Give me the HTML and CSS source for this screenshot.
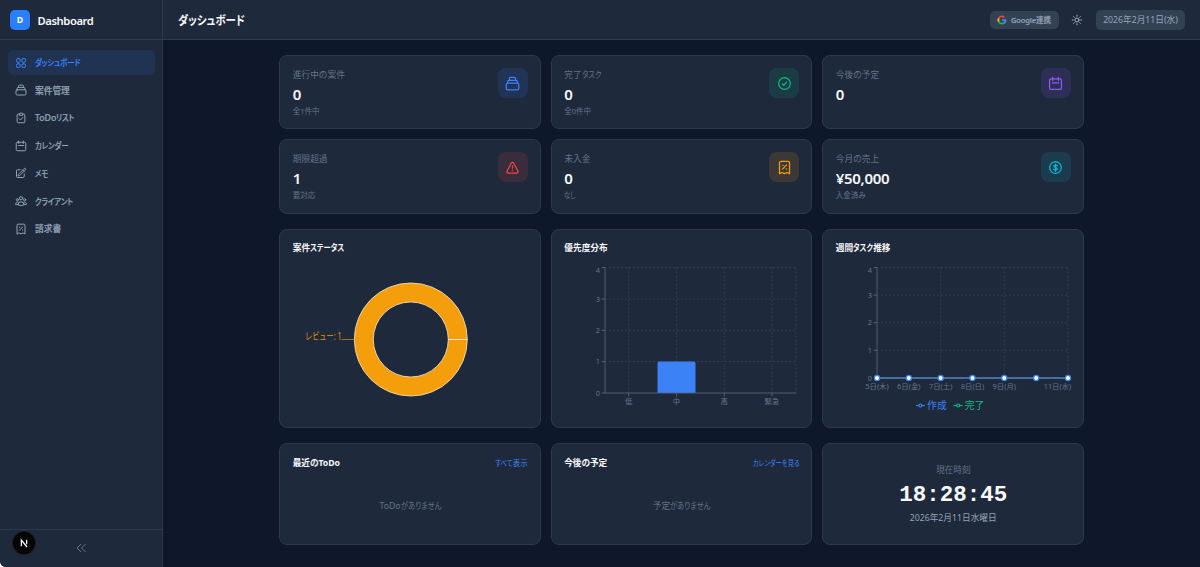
FILE: index.html
```html
<!DOCTYPE html>
<html lang="ja">
<head>
  <meta charset="UTF-8">
  <meta name="viewport" content="width=device-width, initial-scale=1.0">
  <title>ダッシュボード</title>
  <link rel="stylesheet" href="styles.css">
</head>
<body>
  <!-- Iconos compartidos -->
  <svg class="sprite" width="0" height="0">
    <symbol id="i-grid" viewBox="0 0 24 24"><rect x="3" y="3" width="7.5" height="7.5" rx="3"/><rect x="13.5" y="3" width="7.5" height="7.5" rx="3"/><rect x="3" y="13.5" width="7.5" height="7.5" rx="3"/><rect x="13.5" y="13.5" width="7.5" height="7.5" rx="3"/></symbol>
    <symbol id="i-stack" viewBox="0 0 24 24"><rect x="2" y="11.5" width="20" height="10.500" rx="2.5"/><path d="M4.200 11.500V9.200A2.400 2.400 0 0 1 6.600 6.800h10.800a2.400 2.400 0 0 1 2.400 2.400v2.300M7 6.800V4.400a2.200 2.200 0 0 1 2.200-2.200h5.600A2.200 2.200 0 0 1 17 4.400v2.400"/></symbol>
    <symbol id="i-clipboard" viewBox="0 0 24 24"><path d="M8.500 4H6.500a2.200 2.200 0 0 0-2.200 2.200v13A2.200 2.200 0 0 0 6.500 21.500h11a2.200 2.200 0 0 0 2.200-2.300v-13A2.200 2.200 0 0 0 17.500 4h-2M8.500 5.800V4a1.800 1.800 0 0 1 1.800-1.800h3.400A1.800 1.800 0 0 1 15.500 4v1.800zM8.500 13.500l2.500 2.500 4.500-5"/></symbol>
    <symbol id="i-calendar" viewBox="0 0 24 24"><rect x="2.500" y="4.500" width="19" height="17" rx="2.500"/><path d="M7.500 2v5M16.500 2v5M7 11h10"/></symbol>
    <symbol id="i-edit" viewBox="0 0 24 24"><path d="M16.900 4.500l1.700-1.700a1.900 1.900 0 0 1 2.600 2.600L10.600 16.100a4.500 4.500 0 0 1-1.900 1.100L6 18l.8-2.700a4.500 4.500 0 0 1 1.100-1.900zM15.500 6l3 3M18.500 14v4.700a2.300 2.300 0 0 1-2.300 2.300H5.300A2.300 2.300 0 0 1 3 18.700V7.800a2.300 2.300 0 0 1 2.300-2.300H10"/></symbol>
    <symbol id="i-users" viewBox="0 0 24 24"><circle cx="12" cy="6.500" r="3.300"/><circle cx="4.800" cy="9.500" r="2.200"/><circle cx="19.200" cy="9.500" r="2.200"/><path d="M6 19.500a6 6 0 0 1 12 0c-3.500 2-8.500 2-12 0zM6 19H1.200c-.4-3.500 2.300-5.800 5.500-4.500M18 19h4.800c.4-3.500-2.300-5.800-5.500-4.500"/></symbol>
    <symbol id="i-receipt" viewBox="0 0 24 24"><path d="M4 21.800V4.500A2.200 2.200 0 0 1 6.200 2.300h11.600A2.200 2.200 0 0 1 20 4.500v17.300l-4-1.800-4 1.800-4-1.800zM8.800 14.500l6.400-6.600M9 8.500h.6M14.600 14h.6"/></symbol>
    <symbol id="i-check" viewBox="0 0 24 24"><circle cx="12" cy="12" r="9.300"/><path d="M8.800 12.700l2.200 2.200 4.200-5"/></symbol>
    <symbol id="i-alert" viewBox="0 0 24 24"><path d="M12 9v4M12 16.500v.1M3.400 17.700c-.9 1.500.1 3.100 1.800 3.100h13.600c1.700 0 2.700-1.600 1.800-3.100L13.800 4.800a2.100 2.100 0 0 0-3.600 0z"/></symbol>
    <symbol id="i-dollar" viewBox="0 0 24 24"><circle cx="12" cy="12" r="9.300"/><path d="M12 6v12M15 8.900c-1.400-1.300-5.600-1.200-5.700.9 0 2.400 5.700 1.700 5.700 4.400 0 2.200-4.300 2.400-6 .7"/></symbol>
    <symbol id="i-sun" viewBox="0 0 24 24"><circle cx="12" cy="12" r="4"/><path d="M12 2.500v2M12 19.500v2M2.500 12h2M19.500 12h2M5.300 5.300l1.400 1.400M17.300 17.300l1.400 1.400M5.300 18.700l1.400-1.400M17.300 6.700l1.400-1.400"/></symbol>
    <symbol id="i-collapse" viewBox="0 0 24 24"><path d="M11.500 4.500L4 12l7.500 7.500M20.500 4.500L13 12l7.500 7.500"/></symbol>
  </svg>

  <div class="app">
    <aside class="sidebar">
      <div class="brand">
        <span class="brand-logo">D</span>
        <span class="brand-name">Dashboard</span>
      </div>
      <nav class="nav">
        <a class="nav-item active"><svg class="icon"><use href="#i-grid"/></svg><span class="kana">ダッシュボード</span></a>
        <a class="nav-item"><svg class="icon"><use href="#i-stack"/></svg><span>案件管理</span></a>
        <a class="nav-item"><svg class="icon"><use href="#i-clipboard"/></svg><span>ToDo<span class="kana">リスト</span></span></a>
        <a class="nav-item"><svg class="icon"><use href="#i-calendar"/></svg><span class="kana">カレンダー</span></a>
        <a class="nav-item"><svg class="icon"><use href="#i-edit"/></svg><span class="kana">メモ</span></a>
        <a class="nav-item"><svg class="icon"><use href="#i-users"/></svg><span class="kana">クライアント</span></a>
        <a class="nav-item"><svg class="icon"><use href="#i-receipt"/></svg><span>請求書</span></a>
      </nav>
      <div class="sidebar-footer">
        <svg class="icon"><use href="#i-collapse"/></svg>
        <span class="dev-badge"><svg viewBox="0 0 24 24"><path d="M8 17V7.500L16.500 18M16 7v7"/></svg></span>
      </div>
    </aside>

    <div class="main">
      <header class="topbar">
        <h1 class="kana">ダッシュボード</h1>
        <div class="topbar-actions">
          <button class="google-btn">
            <svg viewBox="0 0 24 24"><path fill="#4285f4" d="M22.600 12.200c0-.8-.1-1.500-.2-2.200H12v4.300h5.900a5 5 0 0 1-2.200 3.300v2.800h3.600c2.100-2 3.300-4.800 3.300-8.200z"/><path fill="#34a853" d="M12 23c3 0 5.500-1 7.300-2.700l-3.600-2.800c-1 .7-2.200 1.100-3.700 1.100-2.900 0-5.300-1.900-6.200-4.500H2.200v2.800A11 11 0 0 0 12 23z"/><path fill="#fbbc05" d="M5.800 14.100a6.600 6.600 0 0 1 0-4.200V7.100H2.200a11 11 0 0 0 0 9.800z"/><path fill="#ea4335" d="M12 5.400c1.600 0 3.100.6 4.200 1.600l3.200-3.100A11 11 0 0 0 2.200 7.100l3.600 2.800C6.700 7.300 9.100 5.400 12 5.400z"/></svg>
            <span>Google連携</span>
          </button>
          <svg class="icon sun"><use href="#i-sun"/></svg>
          <span class="today">2026年2月11日(水)</span>
        </div>
      </header>

      <main class="content">
        <section class="grid stats">
          <div class="card stat">
            <div><p class="stat-label">進行中の案件</p><p class="stat-value">0</p><p class="stat-sub">全1件中</p></div>
            <span class="stat-icon blue"><svg class="icon"><use href="#i-stack"/></svg></span>
          </div>
          <div class="card stat">
            <div><p class="stat-label">完了<span class="kana">タスク</span></p><p class="stat-value">0</p><p class="stat-sub">全0件中</p></div>
            <span class="stat-icon green"><svg class="icon"><use href="#i-check"/></svg></span>
          </div>
          <div class="card stat">
            <div><p class="stat-label">今後の予定</p><p class="stat-value">0</p></div>
            <span class="stat-icon purple"><svg class="icon"><use href="#i-calendar"/></svg></span>
          </div>
          <div class="card stat">
            <div><p class="stat-label">期限超過</p><p class="stat-value">1</p><p class="stat-sub">要対応</p></div>
            <span class="stat-icon red"><svg class="icon"><use href="#i-alert"/></svg></span>
          </div>
          <div class="card stat">
            <div><p class="stat-label">未入金</p><p class="stat-value">0</p><p class="stat-sub"><span class="kana">なし</span></p></div>
            <span class="stat-icon amber"><svg class="icon"><use href="#i-receipt"/></svg></span>
          </div>
          <div class="card stat">
            <div><p class="stat-label">今月の売上</p><p class="stat-value">¥50,000</p><p class="stat-sub">入金済み</p></div>
            <span class="stat-icon cyan"><svg class="icon"><use href="#i-dollar"/></svg></span>
          </div>
        </section>

        <section class="grid charts">
          <div class="card">
            <h2>案件<span class="kana">ステータス</span></h2>
            <svg class="chart" viewBox="0 0 236 160">
              <path class="pie" d="M174.300 84.500A56.500 56.500 0 1 0 61.300 84.500A56.500 56.500 0 1 0 174.300 84.500ZM155.300 84.500A37.500 37.500 0 1 1 80.300 84.500A37.500 37.500 0 1 1 155.300 84.500Z"/>
              <path class="pie-split" d="M155.300 84.500H174.300"/>
              <path class="pie-line" d="M48.500 84.500H61"/>
              <text class="pie-label" x="48.500" y="84.500" textLength="36.500" lengthAdjust="spacingAndGlyphs">レビュー: 1</text>
            </svg>
          </div>
          <div class="card">
            <h2>優先度分布</h2>
            <svg class="chart" viewBox="0 0 236 160">
              <path class="gridline" d="M41 12.500H232M41 44H232M41 75.300H232M41 106.600H232M64.700 12.500V138M112.500 12.500V138M160.300 12.500V138M208 12.500V138M232 12.500V138"/>
              <path class="bar" d="M93.500 138V108.600a2 2 0 0 1 2-2h34a2 2 0 0 1 2 2V138z"/>
              <path class="axis" d="M41 12.500V138M41 138H232M37.500 12.500H41M37.500 44H41M37.500 75.300H41M37.500 106.600H41M37.500 138H41M64.700 138v3.500M112.500 138v3.500M160.300 138v3.500M208 138v3.500"/>
              <g class="tick end"><text x="36" y="17.500">4</text><text x="36" y="46.500">3</text><text x="36" y="78">2</text><text x="36" y="109.200">1</text><text x="36" y="140.600">0</text></g>
              <g class="tick mid"><text x="64.700" y="148.500">低</text><text x="112.500" y="148.500">中</text><text x="160.300" y="148.500">高</text><text x="208" y="148.500">緊急</text></g>
            </svg>
          </div>
          <div class="card">
            <h2>週間<span class="kana tight">タスク</span>推移</h2>
            <svg class="chart" viewBox="0 0 236 160">
              <path class="gridline" d="M41 12.500H232M41 40.100H232M41 67.700H232M41 95.300H232M104.700 12.500V123M168.300 12.500V123M232 12.500V123"/>
              <path class="axis" d="M41 12.500V123H232M37.500 12.500H41M37.500 40.100H41M37.500 67.700H41M37.500 95.300H41"/>
              <path class="line" d="M41 123H232"/>
              <g class="dots"><circle cx="41" cy="123" r="2.600"/><circle cx="72.800" cy="123" r="2.600"/><circle cx="104.700" cy="123" r="2.600"/><circle cx="136.500" cy="123" r="2.600"/><circle cx="168.300" cy="123" r="2.600"/><circle cx="200.200" cy="123" r="2.600"/><circle cx="232" cy="123" r="2.600"/></g>
              <g class="tick end"><text x="36" y="17.500">4</text><text x="36" y="42.800">3</text><text x="36" y="70.300">2</text><text x="36" y="98">1</text><text x="36" y="125.600">0</text></g>
              <g class="tick mid"><text x="41" y="133.500">5日(木)</text><text x="72.800" y="133.500">6日(金)</text><text x="104.700" y="133.500">7日(土)</text><text x="136.500" y="133.500">8日(日)</text><text x="168.300" y="133.500">9日(月)</text><text x="221.500" y="133.500">11日(水)</text></g>
              <g class="legend blue-series"><path d="M80 150.500h8.800"/><circle cx="84.400" cy="150.500" r="1.500"/><text x="91" y="153.600">作成</text></g>
              <g class="legend green-series"><path d="M117.700 150.500h8.800"/><circle cx="122.100" cy="150.500" r="1.500"/><text x="128.700" y="153.600">完了</text></g>
            </svg>
          </div>
        </section>

        <section class="grid bottom">
          <div class="card">
            <div class="card-head"><h2>最近のToDo</h2><a><span class="kana">すべて</span>表示</a></div>
            <p class="empty">ToDo<span class="kana">がありません</span></p>
          </div>
          <div class="card">
            <div class="card-head"><h2>今後の予定</h2><a class="kana">カレンダーを見る</a></div>
            <p class="empty">予定<span class="kana">がありません</span></p>
          </div>
          <div class="card clock">
            <p class="clock-label">現在時刻</p>
            <p class="clock-time">18:28:45</p>
            <p class="clock-date">2026年2月11日水曜日</p>
          </div>
        </section>
      </main>
    </div>
  </div>
</body>
</html>
```
FILE: styles.css
```css
* {
  box-sizing: border-box;
}
html {
  background-color: #fff;
}
body {
  margin: 0;
  font-family: "Noto Sans", "Noto Sans CJK JP", sans-serif;
  font-size: 8.7px;
  color: #f8fafc;
}
h1, h2, p {
  margin: 0;
}
.sprite {
  display: block;
  height: 0;
}
.icon {
  width: 12px;
  height: 12px;
  flex: none;
  fill: none;
  stroke: currentColor;
  stroke-width: 2;
  stroke-linecap: round;
  stroke-linejoin: round;
}
/* kana estrecha */
.kana {
  display: inline-block;
  font-feature-settings: "palt";
  transform: scaleX(0.84);
  transform-origin: left;
}
.kana.tight {
  margin-right: -0.45em;
}
.app {
  display: flex;
  height: 567px;
  background-color: #0f172a;
  border-bottom-left-radius: 6px;
  overflow: hidden;
}

/* Barra lateral */
.sidebar {
  display: flex;
  flex-direction: column;
  width: 163px;
  flex: none;
  background-color: #1e293b;
  border-right: 1px solid #2c394d;
}
.brand {
  display: flex;
  align-items: center;
  gap: 7.5px;
  height: 40px;
  padding-left: 10px;
  border-bottom: 1px solid #2f3c50;
}
.brand-logo {
  width: 20px;
  height: 20px;
  border-radius: 5px;
  background-color: #2b7fff;
  font-weight: 700;
  line-height: 20px;
  text-align: center;
}
.brand-name {
  padding-top: 1px;
  font-size: 11.2px;
  font-weight: 600;
  letter-spacing: -0.4px;
}
.nav {
  display: flex;
  flex-direction: column;
  gap: 2.5px;
  flex: 1;
  padding: 10px 7.5px;
}
.nav-item {
  display: flex;
  align-items: center;
  gap: 8px;
  height: 25.2px;
  padding-left: 7.5px;
  border-radius: 6px;
  color: #94a3b8;
  font-weight: 500;
  -webkit-text-stroke: 0.2px currentColor;
  white-space: nowrap;
}
.nav-item.active {
  background-color: #203352;
  color: #3b82f6;
}
.sidebar-footer {
  position: relative;
  display: flex;
  align-items: center;
  justify-content: center;
  height: 38.5px;
  border-top: 1px solid #2c394d;
  color: #64748b;
}
.dev-badge {
  position: absolute;
  left: 13px;
  top: 2px;
  width: 22px;
  height: 22px;
  border-radius: 50%;
  background-color: #050505;
  box-shadow: 0 0 0 1px #181d27;
}
.dev-badge svg {
  display: block;
  width: 16px;
  height: 16px;
  margin: 3px;
  fill: none;
  stroke: #fff;
  stroke-width: 1.8;
}

/* Cabecera */
.main {
  flex: 1;
  min-width: 0;
}
.topbar {
  display: flex;
  align-items: center;
  justify-content: space-between;
  height: 40px;
  padding: 0 15px;
  background-color: #1e293b;
  border-bottom: 1px solid #2f3c50;
}
.topbar h1 {
  font-size: 12.4px;
  font-weight: 700;
}
.topbar-actions {
  display: flex;
  align-items: center;
  color: #94a3b8;
}
.google-btn {
  display: flex;
  align-items: center;
  gap: 4px;
  width: 69px;
  height: 18px;
  padding: 0 7.5px;
  border: none;
  border-radius: 5px;
  background-color: #334155;
  color: #94a3b8;
  font-family: inherit;
  font-size: 7.5px;
  font-weight: 500;
  letter-spacing: -0.1px;
  -webkit-text-stroke: 0.2px currentColor;
  white-space: nowrap;
}
.google-btn svg {
  width: 10px;
  height: 10px;
  flex: none;
}
.sun {
  margin: 0 13px 0 12.5px;
  color: #a5b2c5;
}
.today {
  width: 89px;
  height: 20px;
  border-radius: 5px;
  background-color: #334155;
  font-size: 8.7px;
  line-height: 20px;
  text-align: center;
}

/* Contenido */
.content {
  display: flex;
  flex-direction: column;
  gap: 15px;
  width: 804.5px;
  margin: 15px auto 0;
}
.grid {
  display: grid;
  grid-template-columns: repeat(3, minmax(0, 1fr));
  gap: 10px;
}
.stats {
  grid-auto-rows: 74.4px;
}
.charts {
  grid-auto-rows: 199.5px;
}
.bottom {
  grid-auto-rows: 102px;
}
.card {
  padding: 12px 12px 12px 12.5px;
  background-color: #1e293b;
  border: 1px solid #2c394c;
  border-radius: 8px;
}
.card h2 {
  font-size: 8.7px;
  font-weight: 700;
  line-height: 13px;
}
.stat {
  display: flex;
  justify-content: space-between;
}
.stat-label {
  padding-top: 1px;
  color: #64748b;
  line-height: 13px;
}
.stat-value {
  margin-top: 2px;
  font-size: 15px;
  font-weight: 600;
  letter-spacing: -0.3px;
  line-height: 20px;
}
.stat-sub {
  color: #64748b;
  margin-top: 2px;
  font-size: 7.5px;
  line-height: 10px;
}
.stat-icon {
  display: flex;
  align-items: center;
  justify-content: center;
  width: 30px;
  height: 30px;
  border-radius: 7.5px;
}
.stat-icon .icon {
  width: 15px;
  height: 15px;
}
.blue {
  background-color: #213457;
  color: #3b82f6;
}
.green {
  background-color: #1c3c45;
  color: #10b981;
}
.purple {
  background-color: #2e2e56;
  color: #8b5cf6;
}
.red {
  background-color: #3a2c3c;
  color: #ef4444;
}
.amber {
  background-color: #3c3836;
  color: #f59e0b;
}
.cyan {
  background-color: #1b3c4e;
  color: #06b6d4;
}

/* Gráficas */
.chart {
  display: block;
  width: 236px;
  height: 160px;
  overflow: visible;
}
.pie {
  fill: #f59e0b;
  fill-rule: evenodd;
  stroke: #f5e6c8;
  stroke-width: 0.8;
}
.pie-split {
  stroke: #fff;
  stroke-width: 0.8;
}
.pie-line {
  stroke: #c8841a;
  stroke-width: 0.8;
}
.pie-label {
  fill: #e0920f;
  font-size: 10px;
  text-anchor: end;
}
.gridline {
  fill: none;
  stroke: #354256;
  stroke-width: 0.8;
  stroke-dasharray: 2 2;
}
.axis {
  fill: none;
  stroke: #56647a;
  stroke-width: 0.9;
}
.bar {
  fill: #3b82f6;
}
.tick {
  fill: #64748b;
  font-size: 7.4px;
}
.end {
  text-anchor: end;
}
.mid {
  text-anchor: middle;
}
.line {
  stroke: #4d7cb8;
  stroke-width: 1.3;
}
.dots {
  fill: #fff;
  stroke: #3b82f6;
  stroke-width: 1.2;
}
.legend {
  font-size: 9.9px;
}
.legend path,
.legend circle {
  fill: #1e293b;
  stroke: currentColor;
  stroke-width: 1.2;
}
.legend text {
  fill: currentColor;
}
.blue-series {
  color: #3b82f6;
}
.green-series {
  color: #10b981;
}

/* Fila inferior */
.card-head {
  display: flex;
  align-items: center;
  justify-content: space-between;
  padding-top: 1px;
}
.card-head h2 {
  letter-spacing: -0.1px;
}
.card-head a {
  color: #3b82f6;
  font-size: 7.5px;
  line-height: 13px;
}
.card-head .kana {
  transform-origin: right;
}
.empty {
  margin-top: 30px;
  color: #64748b;
  line-height: 13px;
  text-align: center;
}
.empty .kana {
  margin-right: -0.9em;
}
.clock {
  display: flex;
  flex-direction: column;
  align-items: center;
  padding-top: 20px;
}
.clock-label {
  color: #64748b;
  line-height: 13px;
}
.clock-time {
  margin-top: 4px;
  font-family: "Liberation Mono", monospace;
  font-size: 22.5px;
  font-weight: 700;
  line-height: 28px;
}
.clock-date {
  margin-top: 3px;
  color: #94a3b8;
  line-height: 13px;
}
```
